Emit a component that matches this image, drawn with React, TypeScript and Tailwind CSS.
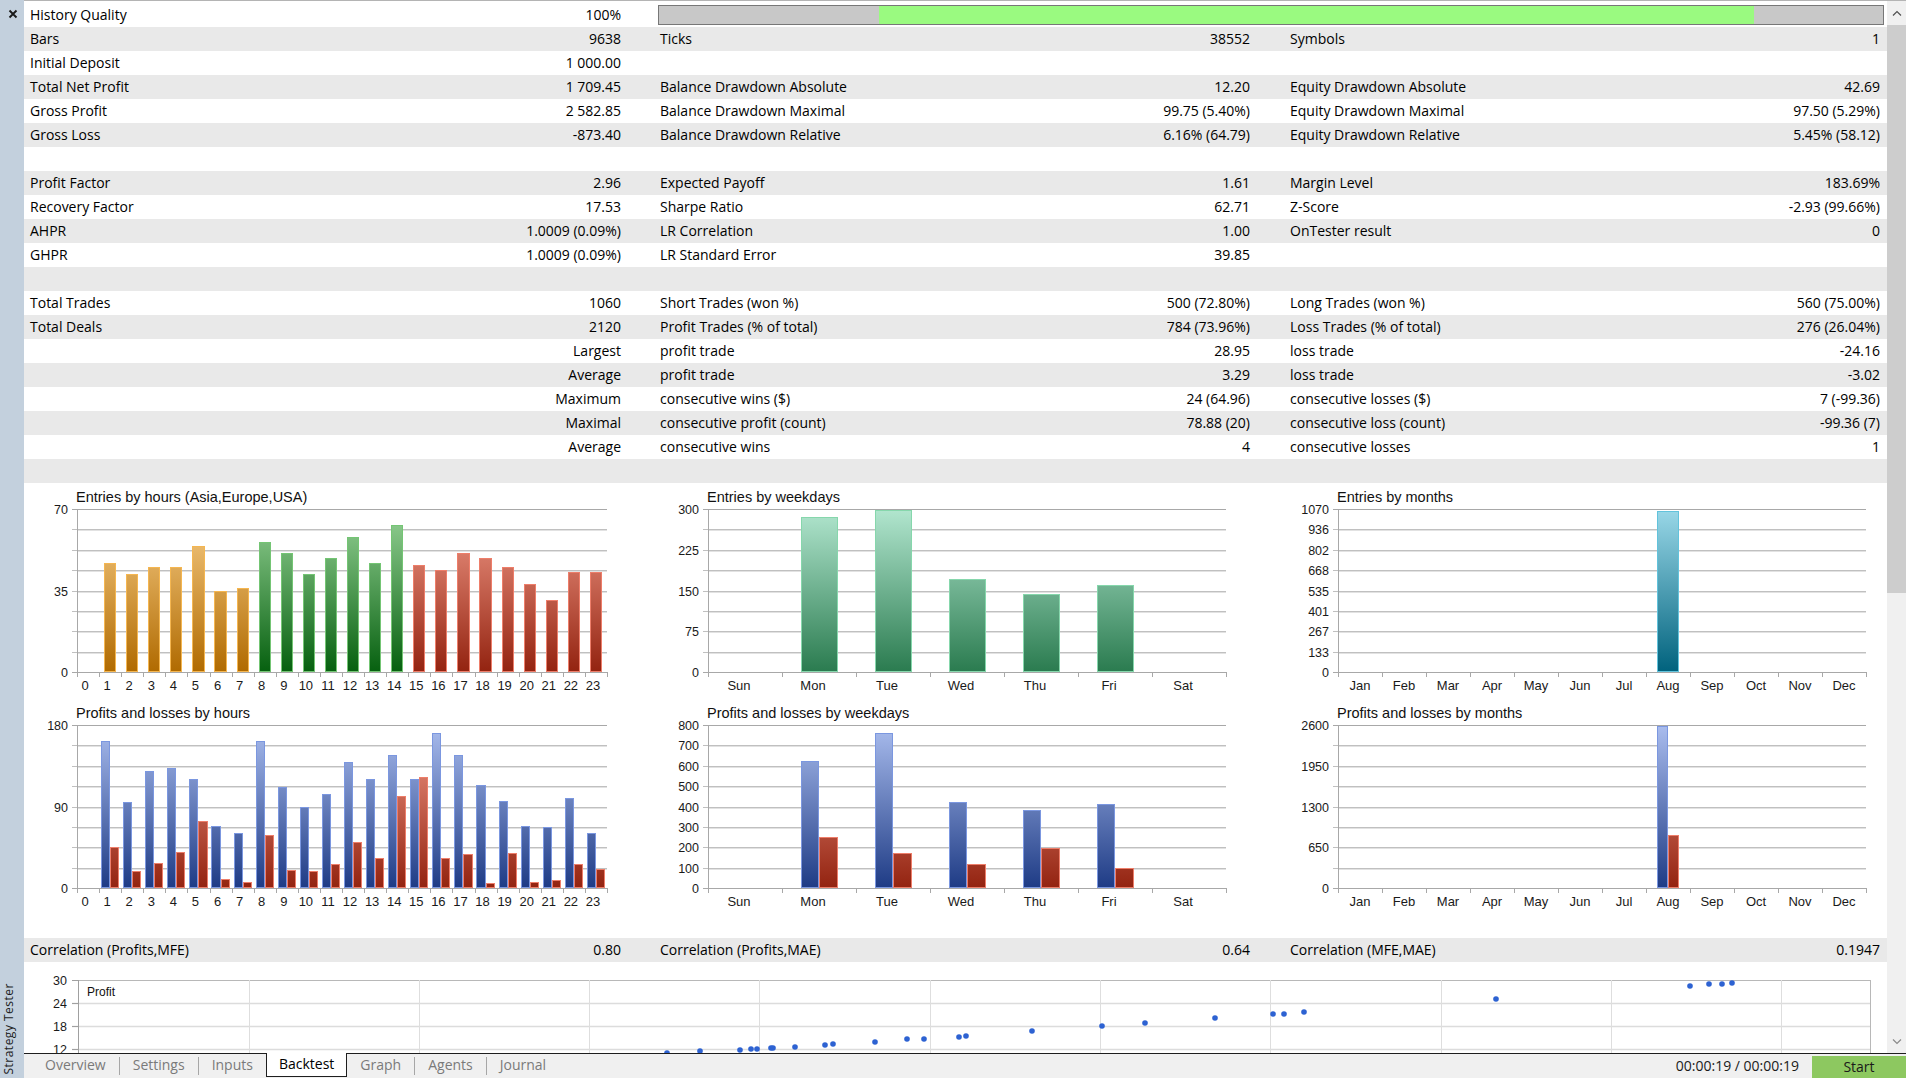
import React from "react";

const FONT_CHART = "'Liberation Sans', Arial, sans-serif";

const G = {
  orange: { top: "#f9cf8a", bottom: "#b06a00", stroke: "#f5b650" },
  green: { top: "#96d296", bottom: "#06600f", stroke: "#74c574" },
  red: { top: "#f39c8a", bottom: "#932310", stroke: "#ee7e6a" },
  mint: { top: "#b2e6cf", bottom: "#2a7b4f", stroke: "#86d7ac" },
  cyan: { top: "#9ad8e8", bottom: "#00627d", stroke: "#62c3dc" },
  blue: { top: "#aabdee", bottom: "#1e3b85", stroke: "#7b97e0" },
};
type GKey = keyof typeof G;
type Bar = { v: number; c: GKey };

interface ChartProps {
  id: string;
  width: number;
  axisX: number;
  plotRight: number;
  title: string;
  max: number;
  yLabels: (string | null)[];
  cats: string[];
  data: Bar[][];
  groupRatio: number;
  labelShift?: number;
}

function BarChart(p: ChartProps) {
  const top = 26;
  const bottom = 189;
  const h = bottom - top;
  const n = p.cats.length;
  const cw = (p.plotRight - p.axisX) / n;
  const shift = p.labelShift ?? 0;
  return (
    <svg width={p.width} height={216} className="block">
      <defs>
        {(Object.keys(G) as GKey[]).map((k) => (
          <linearGradient key={k} id={`${p.id}-${k}`} gradientUnits="userSpaceOnUse" x1="0" y1={top} x2="0" y2={bottom}>
            <stop offset="0" stopColor={G[k].top} />
            <stop offset="1" stopColor={G[k].bottom} />
          </linearGradient>
        ))}
      </defs>
      <text x={p.axisX - 1} y={19} fontSize={14.5} fontFamily={FONT_CHART} fill="#111">
        {p.title}
      </text>
      {Array.from({ length: 9 }).map((_, i) => {
        const y = Math.round(top + (i * h) / 8) + 0.5;
        const edge = i === 0 || i === 8;
        return (
          <g key={i}>
            <line x1={p.axisX - 5} x2={p.plotRight} y1={y} y2={y} stroke={edge ? "#a8a8a8" : "#c0c0c0"} />
            {!edge && <line x1={p.axisX} x2={p.plotRight} y1={y + 1} y2={y + 1} stroke="#e2e2e2" />}
            {p.yLabels[i] && (
              <text x={p.axisX - 9} y={y + 4.5} textAnchor="end" fontSize={12.5} fontFamily={FONT_CHART} fill="#1a1a1a">
                {p.yLabels[i]}
              </text>
            )}
          </g>
        );
      })}
      <line x1={p.axisX + 0.5} x2={p.axisX + 0.5} y1={top} y2={bottom + 5} stroke="#a8a8a8" />
      {Array.from({ length: n }).map((_, i) => {
        const x = Math.round(p.axisX + (i + 1) * cw) + 0.5;
        return <line key={i} x1={x} x2={x} y1={bottom} y2={bottom + 5} stroke="#a8a8a8" />;
      })}
      {p.data.map((bars, i) => {
        const gw = cw * p.groupRatio;
        const x0 = p.axisX + i * cw + (cw - gw) / 2;
        const bw = gw / bars.length;
        return bars.map((b, j) => {
          if (b.v <= 0) return null;
          const bh = (b.v / p.max) * h;
          const x = Math.round(x0 + j * bw);
          const w = Math.round(x0 + (j + 1) * bw) - x;
          const y = Math.round(bottom - bh);
          return (
            <g key={`${i}-${j}`}>
              <rect x={x} y={y} width={w} height={bottom - y} fill={`url(#${p.id}-${b.c})`} />
              <rect x={x + 0.5} y={y + 0.5} width={w - 1} height={bottom - y - 1} fill="none" stroke={G[b.c].stroke} strokeWidth={1} />
            </g>
          );
        });
      })}
      {p.cats.map((c, i) => (
        <text key={c} x={p.axisX + (i + 0.5) * cw + shift} y={207} textAnchor="middle" fontSize={13} fontFamily={FONT_CHART} fill="#1a1a1a">
          {c}
        </text>
      ))}
    </svg>
  );
}

const hours = Array.from({ length: 24 }, (_, i) => String(i));
const hourEntries = [0, 47, 42, 45, 45, 54, 35, 36, 56, 51, 42, 49, 58, 47, 63, 46, 44, 51, 49, 45, 38, 31, 43, 43];
const hourColor = (i: number): GKey => (i <= 7 ? "orange" : i <= 14 ? "green" : "red");
const hourBlue = [0, 162, 95, 129, 133, 120, 69, 61, 162, 112, 89, 104, 139, 120, 147, 120, 171, 147, 114, 96, 69, 67, 99, 61];
const hourRed = [0, 45, 19, 28, 40, 74, 10, 7, 58, 20, 19, 26, 51, 33, 102, 123, 33, 37, 6, 39, 7, 9, 27, 21];

const days = ["Sun", "Mon", "Tue", "Wed", "Thu", "Fri", "Sat"];
const dayEntries = [0, 286, 298, 172, 143, 161, 0];
const dayBlue = [0, 622, 759, 421, 382, 412, 0];
const dayRed = [0, 248, 174, 119, 195, 99, 0];

const months = ["Jan", "Feb", "Mar", "Apr", "May", "Jun", "Jul", "Aug", "Sep", "Oct", "Nov", "Dec"];
const monthEntries = [0, 0, 0, 0, 0, 0, 0, 1060, 0, 0, 0, 0];
const monthBlue = [0, 0, 0, 0, 0, 0, 0, 2583, 0, 0, 0, 0];
const monthRed = [0, 0, 0, 0, 0, 0, 0, 840, 0, 0, 0, 0];

type RowT = [string, string, string, string, string, string];
const rows: RowT[] = [
  ["History Quality", "100%", "", "", "", ""],
  ["Bars", "9638", "Ticks", "38552", "Symbols", "1"],
  ["Initial Deposit", "1 000.00", "", "", "", ""],
  ["Total Net Profit", "1 709.45", "Balance Drawdown Absolute", "12.20", "Equity Drawdown Absolute", "42.69"],
  ["Gross Profit", "2 582.85", "Balance Drawdown Maximal", "99.75 (5.40%)", "Equity Drawdown Maximal", "97.50 (5.29%)"],
  ["Gross Loss", "-873.40", "Balance Drawdown Relative", "6.16% (64.79)", "Equity Drawdown Relative", "5.45% (58.12)"],
  ["", "", "", "", "", ""],
  ["Profit Factor", "2.96", "Expected Payoff", "1.61", "Margin Level", "183.69%"],
  ["Recovery Factor", "17.53", "Sharpe Ratio", "62.71", "Z-Score", "-2.93 (99.66%)"],
  ["AHPR", "1.0009 (0.09%)", "LR Correlation", "1.00", "OnTester result", "0"],
  ["GHPR", "1.0009 (0.09%)", "LR Standard Error", "39.85", "", ""],
  ["", "", "", "", "", ""],
  ["Total Trades", "1060", "Short Trades (won %)", "500 (72.80%)", "Long Trades (won %)", "560 (75.00%)"],
  ["Total Deals", "2120", "Profit Trades (% of total)", "784 (73.96%)", "Loss Trades (% of total)", "276 (26.04%)"],
  ["", "Largest", "profit trade", "28.95", "loss trade", "-24.16"],
  ["", "Average", "profit trade", "3.29", "loss trade", "-3.02"],
  ["", "Maximum", "consecutive wins ($)", "24 (64.96)", "consecutive losses ($)", "7 (-99.36)"],
  ["", "Maximal", "consecutive profit (count)", "78.88 (20)", "consecutive loss (count)", "-99.36 (7)"],
  ["", "Average", "consecutive wins", "4", "consecutive losses", "1"],
  ["", "", "", "", "", ""],
];

function Row({ r, gray, progress }: { r: RowT; gray: boolean; progress?: boolean }) {
  return (
    <div className={`flex h-[24px] shrink-0 items-center leading-[24px] whitespace-nowrap ${gray ? "bg-[#e9e9e9]" : "bg-white"}`}>
      <div className="w-[630px] shrink-0 flex justify-between pl-[6px] pr-[33px]">
        <span>{r[0]}</span>
        <span>{r[1]}</span>
      </div>
      {progress ? (
        <div className="ml-[4px] w-[1226px] h-[20px] border border-[#777777] flex">
          <div className="w-[220px] bg-[#c8c8c8]" />
          <div className="w-[875px] bg-[#9afa80]" />
          <div className="flex-1 bg-[#c8c8c8]" />
        </div>
      ) : (
        <>
          <div className="w-[630px] shrink-0 flex justify-between pl-[6px] pr-[34px]">
            <span>{r[2]}</span>
            <span>{r[3]}</span>
          </div>
          <div className="flex-1 flex justify-between pl-[6px] pr-[7px]">
            <span>{r[4]}</span>
            <span>{r[5]}</span>
          </div>
        </>
      )}
    </div>
  );
}

const dots: [number, number][] = [
  [643, 91], [676, 89], [716, 88], [727, 87], [733, 87], [747, 86], [749, 86], [771, 85], [801, 83], [809, 82],
  [851, 80], [883, 77], [900, 77], [935, 75], [942, 74], [1008, 69], [1078, 64], [1121, 61], [1191, 56],
  [1249, 52], [1260, 52], [1280, 50], [1472, 37], [1666, 24], [1685, 22], [1698, 22], [1708, 21],
];

function Scatter() {
  const hs = [
    { y: 18, l: "30" },
    { y: 41, l: "24" },
    { y: 64, l: "18" },
    { y: 87, l: "12" },
  ];
  const vs = Array.from({ length: 10 }, (_, k) => Math.round(224.5 + k * 170.3) + 0.5);
  return (
    <svg width={1863} height={91} className="block">
      {hs.map((g, i) => (
        <g key={g.l}>
          <line x1={48} x2={1846} y1={g.y + 0.5} y2={g.y + 0.5} stroke={i === 0 ? "#b8b8b8" : "#dcdcdc"} strokeWidth={i === 0 ? 1 : 1.6} />
          <line x1={48} x2={54} y1={g.y + 0.5} y2={g.y + 0.5} stroke="#a0a0a0" />
          <text x={43} y={g.y + 4.5} textAnchor="end" fontSize={12.5} fontFamily={FONT_CHART} fill="#1a1a1a">
            {g.l}
          </text>
        </g>
      ))}
      {vs.map((x) => (
        <line key={x} x1={x} x2={x} y1={18} y2={91} stroke="#dedede" />
      ))}
      <line x1={54.5} x2={54.5} y1={18} y2={91} stroke="#a0a0a0" />
      <line x1={1846.5} x2={1846.5} y1={18} y2={91} stroke="#b8b8b8" />
      <text x={63} y={34} fontSize={12} fontFamily={FONT_CHART} fill="#111">
        Profit
      </text>
      {dots.map(([x, y], i) => (
        <circle key={i} cx={x} cy={y} r={2.8} fill="#2d62d2" />
      ))}
    </svg>
  );
}

function Sidebar() {
  return (
    <div className="w-[24px] h-full shrink-0 bg-[#c3d0dd] flex flex-col justify-between">
      <svg className="mt-[9px] ml-[8px]" width="10" height="10" viewBox="0 0 10 10">
        <path d="M1.5 1.5L8.5 8.5M8.5 1.5L1.5 8.5" stroke="#1a1a1a" strokeWidth="1.9" />
      </svg>
      <div className="[writing-mode:vertical-rl] rotate-180 w-[18px] leading-[18px] mb-[3px] text-[12px] tracking-[0.5px] text-[#1e1e1e] whitespace-nowrap">
        Strategy Tester
      </div>
    </div>
  );
}

function Scrollbar() {
  return (
    <div className="w-[19px] shrink-0 flex flex-col bg-[#f0f0f0]">
      <div className="h-[24px] flex items-center justify-center">
        <svg width="10" height="6" viewBox="0 0 10 6">
          <path d="M1 5.5L5 1.5L9 5.5" stroke="#505050" strokeWidth="1.2" fill="none" />
        </svg>
      </div>
      <div className="h-[568px] bg-[#cdcdcd]" />
      <div className="flex-1" />
      <div className="h-[22px] flex items-center justify-center">
        <svg width="10" height="6" viewBox="0 0 10 6">
          <path d="M1 0.5L5 4.5L9 0.5" stroke="#8a8a8a" strokeWidth="1.2" fill="none" />
        </svg>
      </div>
    </div>
  );
}

function Tab({ children }: { children: React.ReactNode }) {
  return <div className="px-[13px] pb-[2px] flex items-center leading-[20px] text-[#7a7a7a]">{children}</div>;
}
function Sep() {
  return <div className="w-px h-[18px] bg-[#a6a6a6] self-center" />;
}

function TabBar() {
  return (
    <div className="h-[25px] shrink-0 flex border-t border-[#1e1e1e] bg-[#f0f0f0] whitespace-nowrap">
      <div className="w-[8px]" />
      <Tab>Overview</Tab>
      <Sep />
      <Tab>Settings</Tab>
      <Sep />
      <Tab>Inputs</Tab>
      <div className="-mt-px h-[24px] px-[12px] pb-[2px] leading-[20px] bg-white border-x border-b border-[#1e1e1e] flex items-center text-black">Backtest</div>
      <Tab>Graph</Tab>
      <Sep />
      <Tab>Agents</Tab>
      <Sep />
      <Tab>Journal</Tab>
      <div className="flex-1" />
      <div className="flex items-center pb-[1px] leading-[20px] mr-[13px] text-[#1a1a1a]">00:00:19 / 00:00:19</div>
      <div className="w-[94px] mt-[2px] leading-[20px] bg-[#8dc860] flex items-center justify-center text-[#1a1a1a]">Start</div>
    </div>
  );
}

export default function App() {
  return (
    <div className="w-[1906px] h-[1078px] flex overflow-hidden bg-white text-black font-['Open_Sans',sans-serif] text-[14px]">
      <Sidebar />
      <div className="flex-1 flex flex-col min-w-0">
        <div className="h-[1053px] shrink-0 flex border-t border-[#b4b4b4]">
          <div className="flex-1 flex flex-col pt-[2px] overflow-hidden min-w-0">
            {rows.map((r, i) => (
              <Row key={i} r={r} gray={i % 2 === 1} progress={i === 0} />
            ))}
            <div className="h-[455px] shrink-0 flex">
              <div className="w-[630px] shrink-0">
                <BarChart
                  id="he"
                  width={630}
                  axisX={53}
                  plotRight={583}
                  title="Entries by hours (Asia,Europe,USA)"
                  max={70}
                  yLabels={["70", null, null, null, "35", null, null, null, "0"]}
                  cats={hours}
                  data={hourEntries.map((v, i) => [{ v, c: hourColor(i) }])}
                  groupRatio={0.55}
                  labelShift={-3}
                />
                <BarChart
                  id="hp"
                  width={630}
                  axisX={53}
                  plotRight={583}
                  title="Profits and losses by hours"
                  max={180}
                  yLabels={["180", null, null, null, "90", null, null, null, "0"]}
                  cats={hours}
                  data={hourBlue.map((v, i) => [
                    { v, c: "blue" as GKey },
                    { v: hourRed[i], c: "red" as GKey },
                  ])}
                  groupRatio={0.82}
                  labelShift={-3}
                />
              </div>
              <div className="w-[630px] shrink-0">
                <BarChart
                  id="de"
                  width={630}
                  axisX={54}
                  plotRight={572}
                  title="Entries by weekdays"
                  max={300}
                  yLabels={["300", null, "225", null, "150", null, "75", null, "0"]}
                  cats={days}
                  data={dayEntries.map((v) => [{ v, c: "mint" as GKey }])}
                  groupRatio={0.5}
                  labelShift={-6}
                />
                <BarChart
                  id="dp"
                  width={630}
                  axisX={54}
                  plotRight={572}
                  title="Profits and losses by weekdays"
                  max={800}
                  yLabels={["800", "700", "600", "500", "400", "300", "200", "100", "0"]}
                  cats={days}
                  data={dayBlue.map((v, i) => [
                    { v, c: "blue" as GKey },
                    { v: dayRed[i], c: "red" as GKey },
                  ])}
                  groupRatio={0.5}
                  labelShift={-6}
                />
              </div>
              <div className="flex-1">
                <BarChart
                  id="me"
                  width={603}
                  axisX={54}
                  plotRight={582}
                  title="Entries by months"
                  max={1070}
                  yLabels={["1070", "936", "802", "668", "535", "401", "267", "133", "0"]}
                  cats={months}
                  data={monthEntries.map((v) => [{ v, c: "cyan" as GKey }])}
                  groupRatio={0.48}
                />
                <BarChart
                  id="mp"
                  width={603}
                  axisX={54}
                  plotRight={582}
                  title="Profits and losses by months"
                  max={2600}
                  yLabels={["2600", null, "1950", null, "1300", null, "650", null, "0"]}
                  cats={months}
                  data={monthBlue.map((v, i) => [
                    { v, c: "blue" as GKey },
                    { v: monthRed[i], c: "red" as GKey },
                  ])}
                  groupRatio={0.5}
                />
              </div>
            </div>
            <Row r={["Correlation (Profits,MFE)", "0.80", "Correlation (Profits,MAE)", "0.64", "Correlation (MFE,MAE)", "0.1947"]} gray />
            <div className="flex-1 overflow-hidden">
              <Scatter />
            </div>
          </div>
          <Scrollbar />
        </div>
        <TabBar />
      </div>
    </div>
  );
}
